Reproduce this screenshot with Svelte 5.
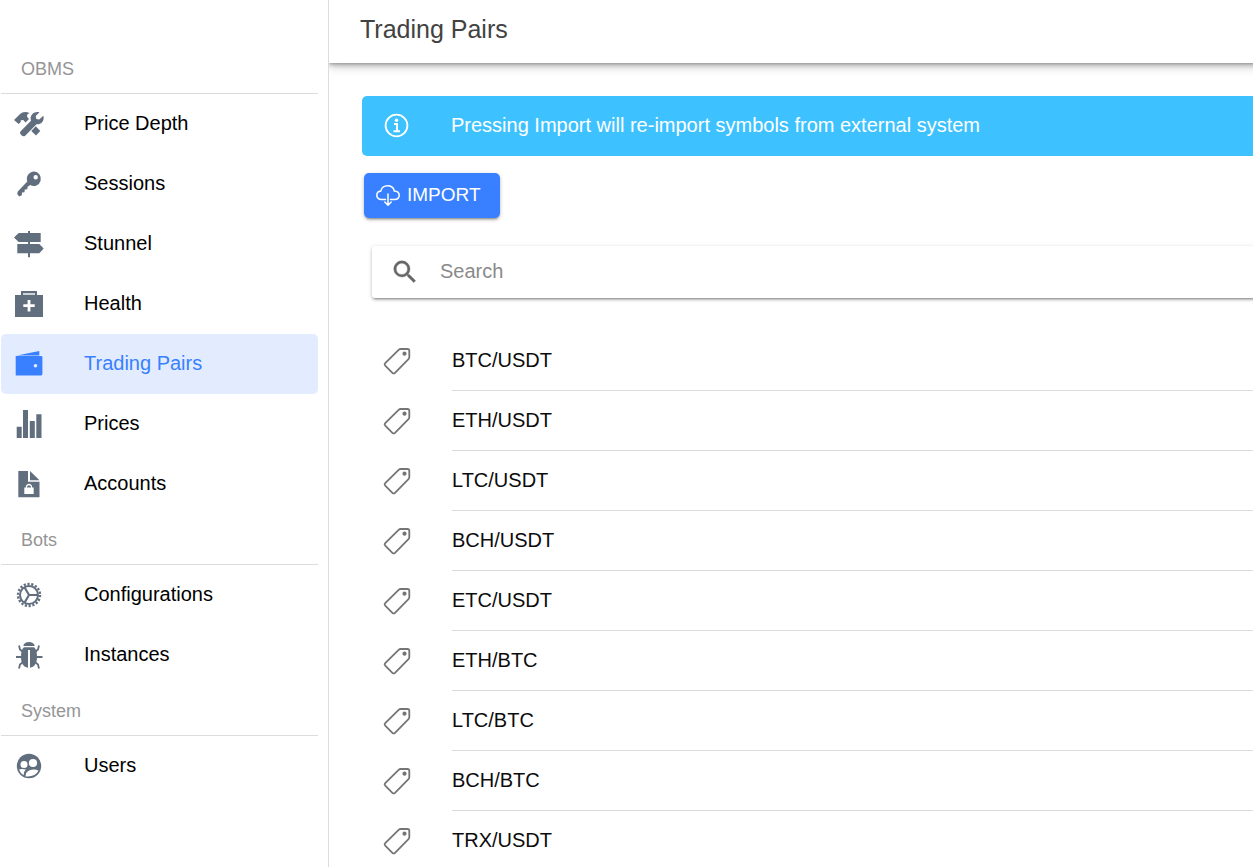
<script lang="ts">
	const menu = [
		{
			title: 'OBMS',
			items: [
				{ name: 'Price Depth', icon: 'tools' },
				{ name: 'Sessions', icon: 'key' },
				{ name: 'Stunnel', icon: 'signs' },
				{ name: 'Health', icon: 'medkit' },
				{ name: 'Trading Pairs', icon: 'wallet' },
				{ name: 'Prices', icon: 'stats' },
				{ name: 'Accounts', icon: 'document' }
			]
		},
		{
			title: 'Bots',
			items: [
				{ name: 'Configurations', icon: 'gear' },
				{ name: 'Instances', icon: 'bug' }
			]
		},
		{
			title: 'System',
			items: [{ name: 'Users', icon: 'users' }]
		}
	];

	const pairs = [
		'BTC/USDT',
		'ETH/USDT',
		'LTC/USDT',
		'BCH/USDT',
		'ETC/USDT',
		'ETH/BTC',
		'LTC/BTC',
		'BCH/BTC',
		'TRX/USDT'
	];

	let selected = 'Trading Pairs';
	let search = '';

	$: visiblePairs = pairs.filter((pair) => pair.includes(search.toUpperCase()));
</script>

{#snippet menuIcon(name: string)}
	<svg class="icon" viewBox="0 0 30 30" fill="currentColor" aria-hidden="true">
		{#if name === 'tools'}
			<path d="M0 11 5.5 5.5C8.5 2.7 12 2.3 15.7 4.2 13.3 4.8 12.8 6 13.2 8L15 10 11.5 13.5 9.5 11.2C8.2 10.8 7.2 11 6.3 12L7 12.8 4.7 15Z" />
			<path d="M21.8 17.2 26.3 22 22 26.6 17.3 22Z" />
			<path d="M25.5 3.2 21.7 7 22.3 10 25.2 10.6 29.3 6.8C30.8 11.3 27.4 16 22.5 15.3L11.2 26.7C9.8 27.8 8.6 27.3 7.2 25.9 5.800 24.500 5.600 23.300 6.700 22.200L17 11.700C15.300 6.500 19.700 1.700 25.500 3.200Z" />
		{:else if name === 'key'}
			<path fill-rule="evenodd" d="M20 2.6a7.2 7.2 0 0 0-6.700 9.800L3.800 22.400 3.200 25 5.200 27.400 7.800 26.200 8 23.500 10.500 23.200 10.800 20.500 13.300 20.300 13.600 17.700 16.200 16.100A7.200 7.200 0 1 0 20 2.600ZM21.700 6a2.200 2.200 0 1 1 0 4.400 2.200 2.200 0 0 1 0-4.400Z" />
		{:else if name === 'signs'}
			<path d="M14 2h2v2h10.700v9H16v2h9.300l4.400 4.600-4.400 4.600H16v4.100h-2v-4.100H3.300V15H14v-2H4.700L0 8.400 4.700 4H14Z" />
		{:else if name === 'medkit'}
			<path d="M9 4h12v2H9Z" opacity="0.3" />
			<path fill-rule="evenodd" d="M7 2h16v4h6v22H1V6h6ZM9 4v2h12V4ZM13.600 11v4.300H9.300v2.800h4.300v4.400h2.800v-4.400h4.300v-2.800h-4.300V11Z" />
		{:else if name === 'wallet'}
			<path d="M1.700 6.800 25.300 2v4.400H1.700Z" />
			<path fill-rule="evenodd" d="M1.700 7h25.400q1.300 0 1.300 1.300v16.800q0 1.300-1.300 1.300H1.700ZM21.500 15a1.800 1.800 0 1 0 0 3.600 1.800 1.800 0 0 0 0-3.600Z" />
		{:else if name === 'stats'}
			<path d="M2.700 17.700h5V29h-5ZM9 1h5v28H9ZM15.800 12h5v17h-5ZM22.300 5.300h5.200V29h-5.200Z" />
		{:else if name === 'document'}
			<path d="M16 2l9.500 9.300H16Z" />
			<path fill-rule="evenodd" d="M4.300 2H14v10.800h11.500v15.500H4.300ZM10.300 18.500V25h9.400v-6.500h-1.500c0-5-6.400-5-6.400 0ZM13 18.500c0-3 4-3 4 0Z" />
		{:else if name === 'gear'}
			<g fill="none" stroke="currentColor">
				<circle cx="15" cy="15" r="9" stroke-width="2" />
				<circle cx="15" cy="15" r="11" stroke-width="2.4" stroke-dasharray="2.2 1.64" />
				<path d="M15 15h9M15 15 10.500 7.200M15 15l-4.500 7.800" stroke-width="2.2" />
			</g>
		{:else if name === 'bug'}
			<path d="M9.300 6C10 .6 20 .6 20.700 6Z" />
			<path d="M14 10v17.700C9.500 27.200 7 23.500 7 17c0-5 .8-8.200 3-9.800h10c2.200 1.600 3 4.800 3 9.800 0 6.500-2.500 10.200-7 10.700V10Z" />
			<path d="M2 17h6M22 17h6.500M5 5.500 6 9.500 9 12M25 5.500 24 9.500 21 12M5 28.500 6 24.500 9 22M25 28.500 24 24.500 21 22" fill="none" stroke="currentColor" stroke-width="1.8" />
		{:else if name === 'users'}
			<circle cx="15" cy="15" r="12.200" />
			<g fill="white">
				<circle cx="19" cy="12" r="4.100" />
				<circle cx="10" cy="13.500" r="3.500" />
				<path d="M5 18.400Q8 17.600 11.800 18.500 9.500 20.700 9.600 24.200 6.500 22.500 5 18.400Z" />
				<path d="M11.600 25.400C11.500 21 14.500 19 19.500 18.600Q22.600 18.500 24.500 19.800 21 26.300 11.600 25.400Z" />
			</g>
		{/if}
	</svg>
{/snippet}

<div class="app">
	<nav class="menu">
		{#each menu as group}
			<section>
				<h2>{group.title}</h2>
				{#each group.items as item}
					<a
						href="#{item.icon}"
						class:selected={selected === item.name}
						on:click={() => (selected = item.name)}
					>
						{@render menuIcon(item.icon)}
						<span>{item.name}</span>
					</a>
				{/each}
			</section>
		{/each}
	</nav>

	<div class="page">
		<header>
			<h1>Trading Pairs</h1>
		</header>
		<main>
			<div class="notice">
				<svg class="icon" viewBox="0 0 30 30" fill="none" stroke="currentColor" aria-hidden="true">
					<circle cx="14.500" cy="14.500" r="10.900" stroke-width="1.8" />
					<circle cx="14.500" cy="9.300" r="1.700" fill="currentColor" stroke="none" />
					<path d="M12 13h3v7M11.500 20.200h6.500" stroke-width="2" />
				</svg>
				<p>Pressing Import will re-import symbols from external system</p>
			</div>

			<button type="button" class="import">
				<svg viewBox="0 0 24 24" fill="none" stroke="currentColor" stroke-width="1.5" stroke-linecap="round" stroke-linejoin="round" aria-hidden="true">
					<path d="M9.500 15.500H5.500C2.500 15.500.8 13.500.8 11.200.8 9 2.500 7.300 4.900 7 5.300 3.800 8.200 1.800 11.500 1.800c3.500 0 6.200 2.200 6.800 5.200 3 .2 4.900 1.900 4.900 4.300 0 2.500-1.900 4.200-4.700 4.200h-4M12 10v11M8.800 18l3.200 3.200 3.200-3.200" />
				</svg>
				<span>IMPORT</span>
			</button>

			<label class="search">
				<svg class="icon" viewBox="0 0 24 24" fill="currentColor" stroke="currentColor" stroke-width="0.3" aria-hidden="true">
					<path d="M15.500 14h-.79l-.28-.27A6.471 6.471 0 0 0 16 9.500 6.500 6.500 0 1 0 9.500 16c1.610 0 3.090-.59 4.230-1.570l.27.28v.79l5 4.990L20.490 19l-4.990-5zm-6 0C7.010 14 5 11.990 5 9.500S7.010 5 9.500 5 14 7.010 14 9.500 11.990 14 9.500 14z" />
				</svg>
				<input type="search" placeholder="Search" aria-label="Search" bind:value={search} />
			</label>

			<ul>
				{#each visiblePairs as pair}
					<li>
						<svg class="icon" viewBox="0 0 30 30" fill="none" stroke="currentColor" stroke-width="1.8" aria-hidden="true">
							<path d="M18.500 3H25.500Q27.300 3 27.300 4.800V11.200Q27.300 12.300 26.500 13.100L13 26.800Q11.700 28 10.400 26.800L3.200 19.700Q2 18.400 3.200 17.200L16.900 3.700Q17.600 3 18.500 3Z" />
							<circle cx="22.500" cy="7.700" r="2.100" fill="currentColor" stroke="none" />
						</svg>
						<span>{pair}</span>
					</li>
				{/each}
			</ul>
		</main>
	</div>
</div>

<style>
	:global(body) {
		margin: 0;
		background: white;
		font-family: 'Liberation Sans', Arial, sans-serif;
		font-size: 20px;
	}

	.app {
		display: flex;
		height: 100vh;
		overflow: hidden;
	}

	.icon {
		width: 30px;
		height: 30px;
		flex-shrink: 0;
	}

	.menu {
		box-sizing: border-box;
		width: 329px;
		flex-shrink: 0;
		padding: 43px 10px 0 1px;
		border-right: 1px solid #dcdcdc;
	}

	.menu h2 {
		box-sizing: border-box;
		height: 51px;
		margin: 0;
		padding-left: 20px;
		border-bottom: 1px solid #dcdcdc;
		color: #959595;
		font-size: 18px;
		font-weight: normal;
		line-height: 52px;
	}

	.menu a {
		display: flex;
		align-items: center;
		gap: 40px;
		height: 60px;
		padding-left: 13px;
		border-radius: 5px;
		color: #616e7e;
		text-decoration: none;
	}

	.menu a span {
		padding-bottom: 2px;
		color: black;
	}

	.menu a.selected {
		background: #e3ecff;
	}

	.menu a.selected,
	.menu a.selected span {
		color: #3880ff;
	}

	/* runs past the window edge so the shadows don't fade out there */
	.page {
		display: flex;
		flex-direction: column;
		flex: 1;
		min-width: 0;
		margin-right: -20px;
	}

	header {
		height: 63px;
		flex-shrink: 0;
		box-shadow:
			0 2px 5px rgba(0, 0, 0, 0.26),
			0 4px 10px rgba(0, 0, 0, 0.16),
			0 1px 2px rgba(0, 0, 0, 0.12);
		clip-path: inset(0 0 -20px 0);
	}

	h1 {
		margin: 0;
		padding-left: 31px;
		color: #424242;
		font-size: 25px;
		font-weight: normal;
		line-height: 58px;
	}

	main {
		padding: 33px 0 0 33px;
	}

	.notice {
		display: flex;
		align-items: center;
		gap: 39px;
		height: 60px;
		padding-left: 20px;
		border-radius: 5px;
		background: #3dc2ff;
		color: white;
	}

	.notice p {
		margin: 0;
		padding-bottom: 2px;
	}

	.import {
		display: flex;
		align-items: center;
		gap: 7px;
		height: 45px;
		margin: 17px 0 0 2px;
		padding: 0 19px 0 12px;
		border: none;
		border-radius: 5px;
		background: #3880ff;
		box-shadow:
			0 3px 2px -2px rgba(0, 0, 0, 0.25),
			0 2px 3px rgba(0, 0, 0, 0.16),
			0 1px 5px rgba(0, 0, 0, 0.14);
		color: white;
		font-family: inherit;
		font-size: 19px;
		font-weight: 500;
	}

	.import svg {
		width: 24px;
		height: 24px;
	}

	.import span {
		padding-bottom: 2px;
	}

	.search {
		display: flex;
		align-items: center;
		gap: 20px;
		height: 52px;
		margin: 28px 0 0 10px;
		padding-left: 18px;
		border-radius: 3px;
		box-shadow:
			0 3px 2px -2px rgba(0, 0, 0, 0.25),
			0 2px 3px rgba(0, 0, 0, 0.16),
			0 1px 5px rgba(0, 0, 0, 0.14);
		color: #666;
	}

	.search input {
		flex: 1;
		min-width: 0;
		padding: 0 0 2px;
		border: none;
		outline: none;
		background: none;
		color: #222;
		font: inherit;
	}

	.search input::placeholder {
		color: #8a8a8a;
	}

	ul {
		margin: 33px 0 0;
		padding: 0 0 0 20px;
		list-style: none;
	}

	li {
		display: flex;
		align-items: center;
		gap: 40px;
		height: 60px;
		color: #757575;
	}

	li span {
		flex: 1;
		border-bottom: 1px solid #dcdcdc;
		color: #0c0c0c;
		line-height: 59px;
	}
</style>
